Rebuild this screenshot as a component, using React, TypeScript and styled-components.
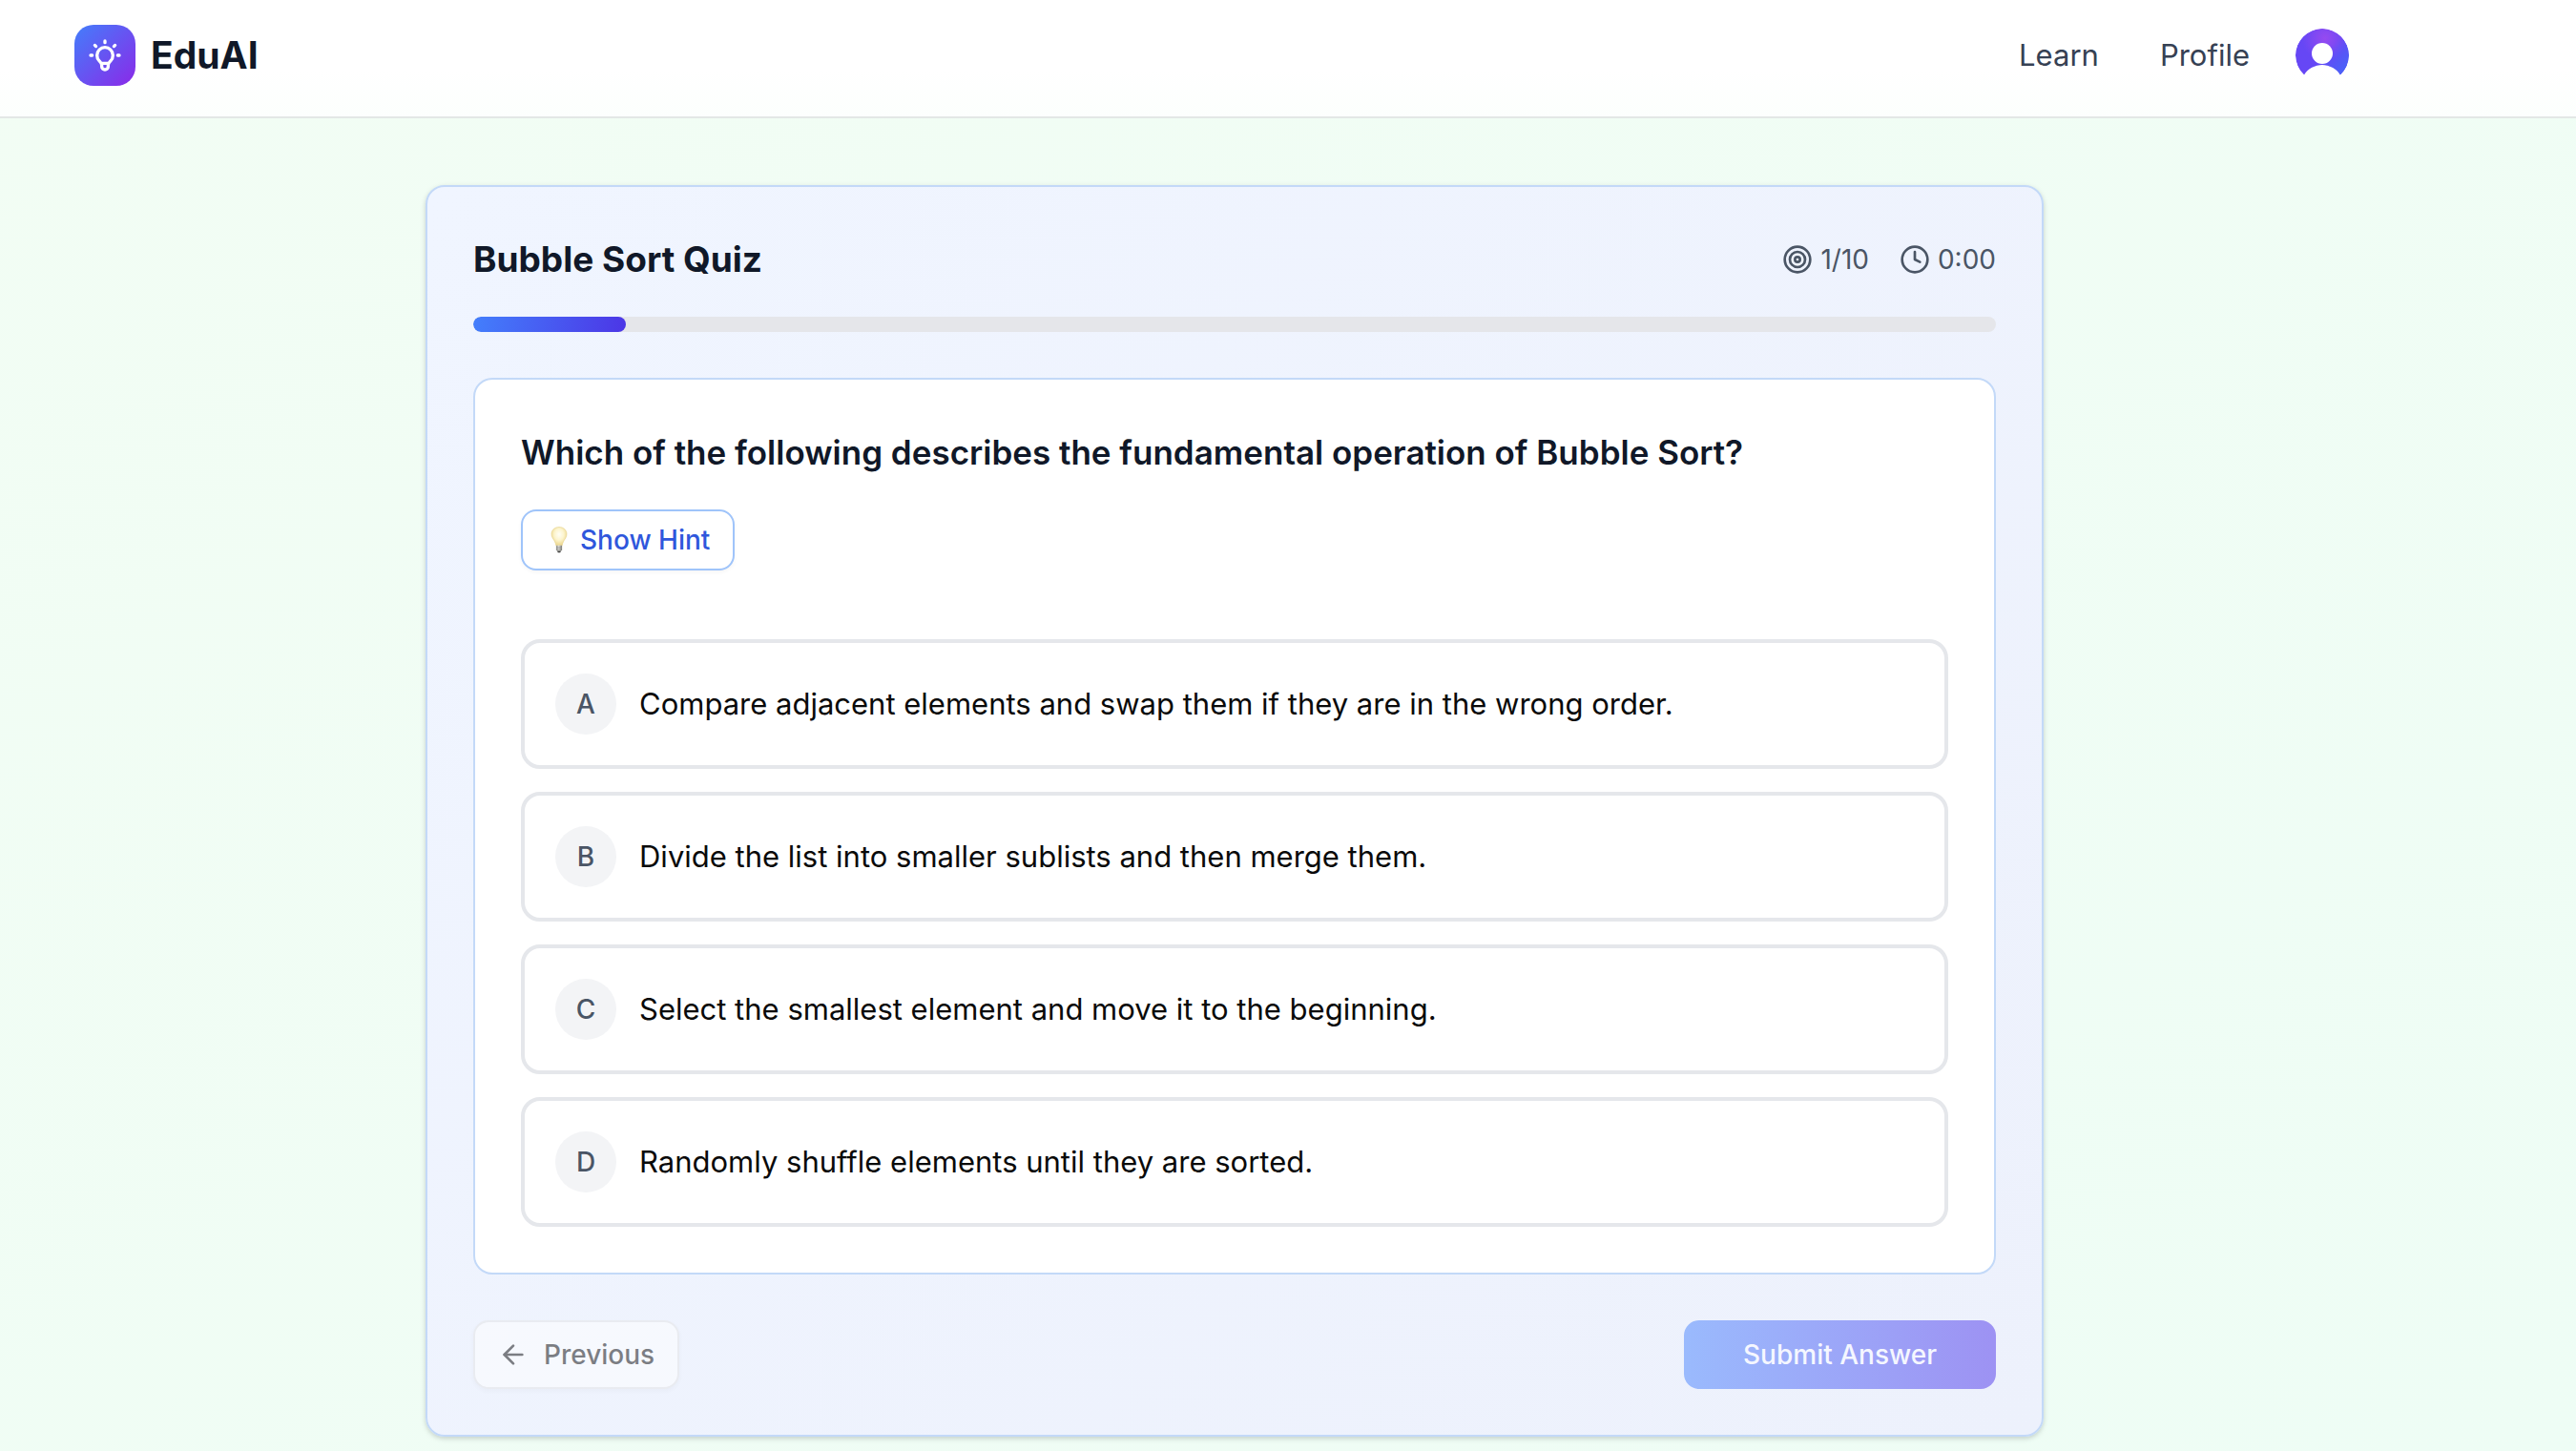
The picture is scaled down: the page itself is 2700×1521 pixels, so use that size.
import React, { useState } from "react";
import styled, { createGlobalStyle, css } from "styled-components";
import { ArrowLeft, Clock, Target } from "lucide-react";

const GlobalStyle = createGlobalStyle`
  *, *::before, *::after { box-sizing: border-box; }
  body {
    margin: 0;
    font-family: Inter, "Liberation Sans", sans-serif;
    color: #0a0a0a;
    -webkit-font-smoothing: antialiased;
  }
  h1, h2, p { margin: 0; }
  button { font-family: inherit; }
`;

const Page = styled.div`
  min-height: 100vh;
  background: linear-gradient(150deg, #f2fdf4 0%, #eefdf5 100%);
`;

const Header = styled.header`
  display: flex;
  align-items: center;
  justify-content: space-between;
  padding: 26px 238px 32px 78px;
  border-bottom: 2px solid #e3e8e6;
  background: linear-gradient(180deg, #ffffff 60%, #fcfffd 100%);
`;

const Brand = styled.a`
  display: flex;
  align-items: center;
  gap: 16px;
  color: #101828;
  font-size: 39px;
  font-weight: 700;
  line-height: 56px;
  text-decoration: none;
`;

const BrandMark = styled.span`
  display: grid;
  place-items: center;
  width: 64px;
  height: 64px;
  border-radius: 20px;
  background: linear-gradient(135deg, #437efb, #8b29e8);
`;

const Nav = styled.nav`
  display: flex;
  align-items: center;
  gap: 64px;
`;

const NavLink = styled.a`
  color: #364153;
  font-size: 31px;
  line-height: 48px;
  text-decoration: none;
`;

const NavEnd = styled.div`
  display: flex;
  align-items: center;
  gap: 48px;
`;

const AvatarButton = styled.button`
  display: block;
  width: 56px;
  height: 56px;
  padding: 0;
  border: 0;
  border-radius: 50%;
  overflow: hidden;
  background: none;
`;

const Main = styled.main`
  display: flex;
  justify-content: center;
  padding: 70px 112px 0 0;
`;

const panel = css`
  border: 2px solid #c3d9f8;
  border-radius: 20px;
  padding: 48px;
`;

const QuizCard = styled.section`
  ${panel}
  width: 100%;
  max-width: 1696px;
  display: flex;
  flex-direction: column;
  gap: 48px;
  background: linear-gradient(135deg, #f0f5ff, #edf1fc);
  box-shadow: 0 2px 6px rgba(0, 0, 0, 0.1), 0 2px 4px rgba(0, 0, 0, 0.08);
`;

const QuizHead = styled.div`
  display: flex;
  flex-direction: column;
  gap: 32px;
`;

const TitleRow = styled.div`
  display: flex;
  align-items: center;
  justify-content: space-between;
`;

const Title = styled.h1`
  color: #101828;
  font-size: 37px;
  font-weight: 700;
  line-height: 56px;
`;

const Stats = styled.div`
  display: flex;
  gap: 32px;
`;

const Stat = styled.span`
  display: flex;
  align-items: center;
  gap: 8px;
  color: #4a5565;
  font-size: 28px;
  line-height: 40px;
`;

const Track = styled.div`
  height: 16px;
  border-radius: 8px;
  overflow: hidden;
  background: #e5e6ea;
`;

const Fill = styled.div`
  height: 100%;
  border-radius: 8px;
  background: linear-gradient(100deg, #437ffc, #4c36e6);
`;

const QuestionCard = styled.div`
  ${panel}
  background: #ffffff;
`;

const Question = styled.h2`
  color: #101828;
  font-size: 35px;
  font-weight: 600;
  line-height: 56px;
`;

const baseButton = css`
  display: inline-flex;
  align-items: center;
  border-radius: 16px;
  font-size: 28px;
  font-weight: 500;
  line-height: 40px;
`;

const HintButton = styled.button`
  ${baseButton}
  gap: 8px;
  margin-top: 32px;
  padding: 10px 24px;
  border: 2px solid #9fc4fa;
  background: #ffffff;
  color: #2f57dc;
  box-shadow: 0 2px 4px rgba(0, 0, 0, 0.04);
`;

const Options = styled.div`
  display: flex;
  flex-direction: column;
  gap: 24px;
  margin-top: 72px;
`;

const Option = styled.button<{ $selected: boolean }>`
  display: flex;
  align-items: center;
  gap: 24px;
  padding: 32px;
  border: 4px solid ${(p) => (p.$selected ? "#437ffc" : "#e5e7eb")};
  border-radius: 20px;
  background: #ffffff;
  color: #0a0a0a;
  font-size: 31px;
  line-height: 52px;
  text-align: left;
`;

const Letter = styled.span`
  display: grid;
  place-items: center;
  flex: none;
  width: 64px;
  height: 64px;
  border-radius: 50%;
  background: #f3f4f6;
  color: #4a5565;
  font-size: 28px;
  font-weight: 500;
  line-height: 40px;
`;

const Actions = styled.div`
  display: flex;
  justify-content: space-between;
`;

const PreviousButton = styled.button`
  ${baseButton}
  gap: 16px;
  padding: 14px 24px;
  border: 2px solid #e5e5e5;
  background: #ffffff;
  color: #0a0a0a;
  box-shadow: 0 2px 4px rgba(0, 0, 0, 0.05);

  &:disabled { opacity: 0.5; }
`;

const SubmitButton = styled.button`
  ${baseButton}
  padding: 16px 62px;
  border: 0;
  background: linear-gradient(90deg, #437ffc, #4c36e6);
  color: #ffffff;

  &:disabled {
    background: linear-gradient(90deg, #9abafd, #9d92f3);
    color: #f5f7ff;
  }
`;

const BulbOutline = () => (
  <svg width="40" height="40" viewBox="0 0 24 24" fill="none" stroke="#fff" strokeWidth="2" strokeLinecap="round" strokeLinejoin="round" aria-hidden="true">
    <path d="M9.663 17h4.673M12 3v1m6.364 1.636l-.707.707M21 12h-1M4 12H3m3.343-5.657l-.707-.707m2.828 9.9a5 5 0 117.072 0l-.548.547A3.374 3.374 0 0014 18.469V19a2 2 0 11-4 0v-.531c0-.895-.356-1.754-.988-2.386l-.548-.547z" />
  </svg>
);

const Avatar = () => (
  <svg width="56" height="56" viewBox="0 0 56 56" aria-hidden="true">
    <defs>
      <radialGradient id="avatar-fill" gradientUnits="userSpaceOnUse" cx="31" cy="10" r="24">
        <stop offset="0" stopColor="#964af0" />
        <stop offset="1" stopColor="#6647f5" />
      </radialGradient>
      <linearGradient id="avatar-blue" x1="0.5" y1="0.4" x2="1" y2="0.8">
        <stop offset="0.2" stopColor="#4a62f8" stopOpacity="0" />
        <stop offset="1" stopColor="#4a62f8" />
      </linearGradient>
    </defs>
    <path d="M9 48.5A28 28 0 1 1 47 48.5A22.4 22.4 0 0 0 9 48.5Z" fill="url(#avatar-fill)" />
    <path d="M9 48.5A28 28 0 1 1 47 48.5A22.4 22.4 0 0 0 9 48.5Z" fill="url(#avatar-blue)" />
    <circle cx="28" cy="26" r="11" fill="#fff" />
  </svg>
);

const GlowingBulb = () => (
  <svg width="28" height="28" viewBox="0 0 28 28" aria-hidden="true">
    <defs>
      <radialGradient id="bulb-glass" cx="0.5" cy="0.4" r="0.6">
        <stop offset="0" stopColor="#fffef6" />
        <stop offset="0.5" stopColor="#fdf5cf" />
        <stop offset="1" stopColor="#ecd68a" />
      </radialGradient>
      <linearGradient id="bulb-base" x1="0" y1="0" x2="1" y2="0">
        <stop offset="0" stopColor="#8d8d88" />
        <stop offset="0.45" stopColor="#dededa" />
        <stop offset="1" stopColor="#777773" />
      </linearGradient>
    </defs>
    <path d="M14 .5C9.300.5 6 3.700 6 7.800c0 2.800 1.500 4.700 2.900 6.900 1 1.600 1.600 3.200 1.900 5.100h6.400c.3-1.900.9-3.500 1.900-5.100C20.500 12.500 22 10.600 22 7.800 22 3.700 18.700.5 14 .5Z" fill="url(#bulb-glass)" stroke="#e6d28c" strokeWidth="0.6" />
    <path d="M10.900 19.800h6.200v4.600l-1 1.200h-4.200l-1-1.200Z" fill="url(#bulb-base)" />
    <path d="M11 22h6M11.200 24.200h5.600" stroke="#85857f" strokeWidth="0.6" />
    <path d="M11.900 25.500h4.200L15.200 27.200h-2.400Z" fill="#3d3d3b" />
  </svg>
);

const answers = [
  "Compare adjacent elements and swap them if they are in the wrong order.",
  "Divide the list into smaller sublists and then merge them.",
  "Select the smallest element and move it to the beginning.",
  "Randomly shuffle elements until they are sorted.",
];

const current = 1;
const total = 10;

export default function App() {
  const [selected, setSelected] = useState<number | null>(null);

  return (
    <>
      <GlobalStyle />
      <Page>
        <Header>
          <Brand href="#">
            <BrandMark><BulbOutline /></BrandMark>
            EduAI
          </Brand>
          <NavEnd>
            <Nav>
              <NavLink href="#learn">Learn</NavLink>
              <NavLink href="#profile">Profile</NavLink>
            </Nav>
            <AvatarButton type="button" aria-label="Account"><Avatar /></AvatarButton>
          </NavEnd>
        </Header>
        <Main>
          <QuizCard>
            <QuizHead>
              <TitleRow>
                <Title>Bubble Sort Quiz</Title>
                <Stats>
                  <Stat><Target size={32} aria-hidden="true" />{`${current}/${total}`}</Stat>
                  <Stat><Clock size={32} aria-hidden="true" />0:00</Stat>
                </Stats>
              </TitleRow>
              <Track role="progressbar" aria-label="Quiz progress" aria-valuenow={current} aria-valuemin={0} aria-valuemax={total}>
                <Fill style={{ width: `${(current / total) * 100}%` }} />
              </Track>
            </QuizHead>
            <QuestionCard>
              <Question>Which of the following describes the fundamental operation of Bubble Sort?</Question>
              <HintButton type="button"><GlowingBulb />Show Hint</HintButton>
              <Options>
                {answers.map((text, i) => (
                  <Option key={text} type="button" $selected={selected === i} aria-pressed={selected === i} onClick={() => setSelected(i)}>
                    <Letter>{String.fromCharCode(65 + i)}</Letter>
                    <span>{text}</span>
                  </Option>
                ))}
              </Options>
            </QuestionCard>
            <Actions>
              <PreviousButton type="button" disabled><ArrowLeft size={32} aria-hidden="true" />Previous</PreviousButton>
              <SubmitButton type="button" disabled={selected === null}>Submit Answer</SubmitButton>
            </Actions>
          </QuizCard>
        </Main>
      </Page>
    </>
  );
}
